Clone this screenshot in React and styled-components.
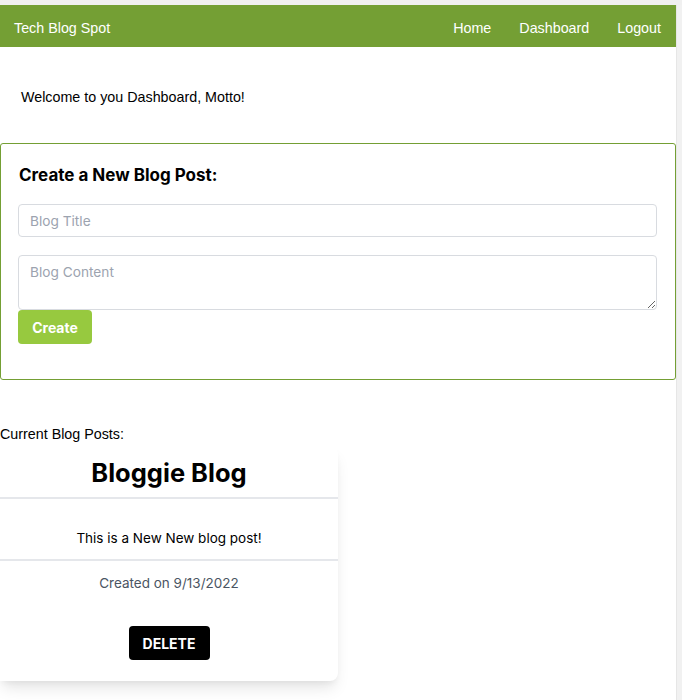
import React from "react";
import styled, { createGlobalStyle } from "styled-components";

const Global = createGlobalStyle`
  html, body { margin: 0; padding: 0; }
  body { font-family: "Liberation Sans", Arial, sans-serif; font-size: 14.3px; color: #000; background: #f0f0f0; }
  * { box-sizing: border-box; }
`;

const Frame = styled.div`
  display: flex;
  padding-top: 5px;
  min-height: 700px;
  background: #f0f0f0;
`;

const Page = styled.div`
  flex: 1;
  background: #fff;
  min-height: 695px;
`;

const ScrollTrack = styled.div`
  width: 6px;
  background: #f1f1f1;
  border-left: 1px solid #e6e6e6;
`;

const Nav = styled.nav`
  height: 42px;
  background: #749f34;
  display: flex;
  align-items: center;
  justify-content: space-between;
  padding: 3px 15px 0 14px;
  color: #fff;
  font-family: "Liberation Sans", Arial, sans-serif;
  font-size: 14.3px;
`;

const Brand = styled.a`
  color: #fff;
  text-decoration: none;
`;

const Links = styled.div`
  display: flex;
  gap: 28px;
`;

const NavLink = styled.a`
  color: #fff;
  text-decoration: none;
`;

const Welcome = styled.p`
  margin: 0;
  padding: 42px 21px 38px;
  line-height: 16px;
`;

const FormBox = styled.form`
  border: 1px solid #749f34;
  border-radius: 3px;
  padding: 17px 18px 35px 17px;
  display: flex;
  flex-direction: column;
  font-family: Inter, "Noto Sans", sans-serif;
`;

const FormTitle = styled.h3`
  margin: 0 0 15px 1px;
  font-size: 17px;
  line-height: 28px;
  font-weight: 700;
`;

const Field = styled.input`
  height: 33px;
  border: 1px solid #d8dbe0;
  border-radius: 4px;
  padding: 0 11px;
  font-family: Inter, "Noto Sans", sans-serif;
  font-size: 13.7px;
  margin-bottom: 18px;
  &::placeholder { color: #9ca3af; }
`;

const Area = styled.textarea`
  height: 55px;
  border: 1px solid #d8dbe0;
  border-radius: 4px;
  padding: 8px 11px;
  font-family: Inter, "Noto Sans", sans-serif;
  font-size: 13.7px;
  margin: 0;
  display: block;
  resize: vertical;
  &::placeholder { color: #9ca3af; }
`;

const CreateButton = styled.button`
  align-self: flex-start;
  height: 34px;
  width: 74px;
  border: none;
  border-radius: 4px;
  background: #97c93f;
  color: #fff;
  font-family: Inter, "Noto Sans", sans-serif;
  font-weight: 700;
  font-size: 14px;
  cursor: pointer;
`;

const SectionLabel = styled.p`
  margin: 0;
  padding-top: 46px;
  line-height: 16px;
  height: 66px;
`;

const Card = styled.article`
  width: 338px;
  background: #fff;
  border-radius: 0 8px 8px 0;
  box-shadow: 0 10px 15px -3px rgba(0,0,0,0.1), 0 4px 6px -2px rgba(0,0,0,0.05);
  font-family: Inter, "Noto Sans", sans-serif;
  text-align: center;
`;

const CardTitle = styled.h2`
  margin: 0;
  padding: 10px 16px 8px;
  font-size: 25.5px;
  line-height: 33px;
  font-weight: 700;
  border-bottom: 2px solid #e5e7eb;
`;

const CardBody = styled.p`
  margin: 0;
  padding: 29px 16px 11px;
  font-size: 13.5px;
  line-height: 20px;
  border-bottom: 2px solid #e5e7eb;
`;

const CardFooter = styled.div`
  padding: 12px 16px 21px;
  display: flex;
  flex-direction: column;
  align-items: center;
  gap: 33px;
`;

const DateText = styled.span`
  font-size: 13.5px;
  line-height: 20px;
  color: #4b5563;
`;

const DeleteButton = styled.button`
  height: 34px;
  width: 81px;
  border: none;
  border-radius: 4px;
  background: #000;
  color: #fff;
  font-family: Inter, "Noto Sans", sans-serif;
  font-weight: 700;
  font-size: 14px;
  text-transform: uppercase;
  cursor: pointer;
`;

export default function App() {
  return (
    <>
      <Global />
      <Frame>
        <Page>
          <Nav>
            <Brand href="#">Tech Blog Spot</Brand>
            <Links>
              <NavLink href="#">Home</NavLink>
              <NavLink href="#">Dashboard</NavLink>
              <NavLink href="#">Logout</NavLink>
            </Links>
          </Nav>
          <Welcome>Welcome to you Dashboard, Motto!</Welcome>
          <FormBox onSubmit={(e) => e.preventDefault()}>
            <FormTitle>Create a New Blog Post:</FormTitle>
            <Field placeholder="Blog Title" />
            <Area placeholder="Blog Content" />
            <CreateButton type="submit">Create</CreateButton>
          </FormBox>
          <SectionLabel>Current Blog Posts:</SectionLabel>
          <Card>
            <CardTitle>Bloggie Blog</CardTitle>
            <CardBody>This is a New New blog post!</CardBody>
            <CardFooter>
              <DateText>Created on 9/13/2022</DateText>
              <DeleteButton>Delete</DeleteButton>
            </CardFooter>
          </Card>
        </Page>
        <ScrollTrack />
      </Frame>
    </>
  );
}
